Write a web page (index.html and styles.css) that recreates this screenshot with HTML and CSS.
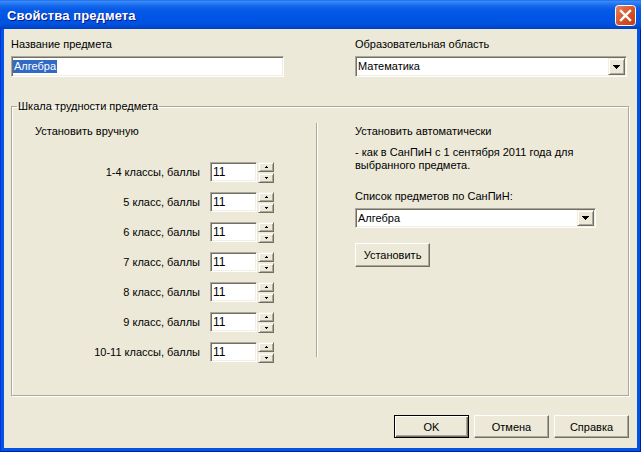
FILE: index.html
```html
<!DOCTYPE html>
<html lang="ru">
<head>
<meta charset="utf-8">
<title>Свойства предмета</title>
<link rel="stylesheet" href="styles.css">
</head>
<body>
<div class="window">
  <div class="titlebar">
    <span class="title">Свойства предмета</span>
    <span class="close" aria-label="Закрыть">
      <svg width="21" height="21" viewBox="0 0 21 21">
        <defs>
          <linearGradient id="cg" x1="0" y1="0" x2="1" y2="1">
            <stop offset="0" stop-color="#E8855F"/>
            <stop offset="0.5" stop-color="#D9542C"/>
            <stop offset="1" stop-color="#C03A12"/>
          </linearGradient>
        </defs>
        <rect x="0.5" y="0.5" width="20" height="20" rx="3" ry="3" fill="url(#cg)" stroke="#FFFFFF"/>
        <path d="M6 6 L15 15 M15 6 L6 15" stroke="#FFFFFF" stroke-width="2.4" stroke-linecap="square"/>
      </svg>
    </span>
  </div>
  <div class="frame">
    <div class="client">
      <div class="top">
        <div class="field">
          <span class="lbl">Название предмета</span>
          <div class="edit"><span class="sel">Алгебра</span></div>
        </div>
        <div class="field">
          <span class="lbl">Образовательная область</span>
          <div class="edit combo">
            <span class="combo-text">Математика</span>
            <span class="raised drop">
              <svg width="7" height="4" viewBox="0 0 7 4" shape-rendering="crispEdges"><rect x="0" y="0" width="7" height="1"/><rect x="1" y="1" width="5" height="1"/><rect x="2" y="2" width="3" height="1"/><rect x="3" y="3" width="1" height="1"/></svg>
            </span>
          </div>
        </div>
      </div>

      <fieldset class="group">
        <legend>Шкала трудности предмета</legend>
        <div class="cols">
          <div class="manual">
            <div class="head">Установить вручную</div>
            <div class="rows">
              <div class="row"><span class="rlbl">1-4 классы, баллы</span><div class="edit num">11</div><div class="spin"><span class="raised sb"><svg width="3" height="2" viewBox="0 0 3 2" shape-rendering="crispEdges"><rect x="1" y="0" width="1" height="1"/><rect x="0" y="1" width="3" height="1"/></svg></span><span class="raised sb"><svg width="3" height="2" viewBox="0 0 3 2" shape-rendering="crispEdges"><rect x="0" y="0" width="3" height="1"/><rect x="1" y="1" width="1" height="1"/></svg></span></div></div>
              <div class="row"><span class="rlbl">5 класс, баллы</span><div class="edit num">11</div><div class="spin"><span class="raised sb"><svg width="3" height="2" viewBox="0 0 3 2" shape-rendering="crispEdges"><rect x="1" y="0" width="1" height="1"/><rect x="0" y="1" width="3" height="1"/></svg></span><span class="raised sb"><svg width="3" height="2" viewBox="0 0 3 2" shape-rendering="crispEdges"><rect x="0" y="0" width="3" height="1"/><rect x="1" y="1" width="1" height="1"/></svg></span></div></div>
              <div class="row"><span class="rlbl">6 класс, баллы</span><div class="edit num">11</div><div class="spin"><span class="raised sb"><svg width="3" height="2" viewBox="0 0 3 2" shape-rendering="crispEdges"><rect x="1" y="0" width="1" height="1"/><rect x="0" y="1" width="3" height="1"/></svg></span><span class="raised sb"><svg width="3" height="2" viewBox="0 0 3 2" shape-rendering="crispEdges"><rect x="0" y="0" width="3" height="1"/><rect x="1" y="1" width="1" height="1"/></svg></span></div></div>
              <div class="row"><span class="rlbl">7 класс, баллы</span><div class="edit num">11</div><div class="spin"><span class="raised sb"><svg width="3" height="2" viewBox="0 0 3 2" shape-rendering="crispEdges"><rect x="1" y="0" width="1" height="1"/><rect x="0" y="1" width="3" height="1"/></svg></span><span class="raised sb"><svg width="3" height="2" viewBox="0 0 3 2" shape-rendering="crispEdges"><rect x="0" y="0" width="3" height="1"/><rect x="1" y="1" width="1" height="1"/></svg></span></div></div>
              <div class="row"><span class="rlbl">8 класс, баллы</span><div class="edit num">11</div><div class="spin"><span class="raised sb"><svg width="3" height="2" viewBox="0 0 3 2" shape-rendering="crispEdges"><rect x="1" y="0" width="1" height="1"/><rect x="0" y="1" width="3" height="1"/></svg></span><span class="raised sb"><svg width="3" height="2" viewBox="0 0 3 2" shape-rendering="crispEdges"><rect x="0" y="0" width="3" height="1"/><rect x="1" y="1" width="1" height="1"/></svg></span></div></div>
              <div class="row"><span class="rlbl">9 класс, баллы</span><div class="edit num">11</div><div class="spin"><span class="raised sb"><svg width="3" height="2" viewBox="0 0 3 2" shape-rendering="crispEdges"><rect x="1" y="0" width="1" height="1"/><rect x="0" y="1" width="3" height="1"/></svg></span><span class="raised sb"><svg width="3" height="2" viewBox="0 0 3 2" shape-rendering="crispEdges"><rect x="0" y="0" width="3" height="1"/><rect x="1" y="1" width="1" height="1"/></svg></span></div></div>
              <div class="row"><span class="rlbl">10-11 классы, баллы</span><div class="edit num">11</div><div class="spin"><span class="raised sb"><svg width="3" height="2" viewBox="0 0 3 2" shape-rendering="crispEdges"><rect x="1" y="0" width="1" height="1"/><rect x="0" y="1" width="3" height="1"/></svg></span><span class="raised sb"><svg width="3" height="2" viewBox="0 0 3 2" shape-rendering="crispEdges"><rect x="0" y="0" width="3" height="1"/><rect x="1" y="1" width="1" height="1"/></svg></span></div></div>
            </div>
          </div>
          <div class="vsep"></div>
          <div class="auto">
            <div class="head">Установить автоматически</div>
            <p class="para">- как в СанПиН с 1 сентября 2011 года для<br>выбранного предмета.</p>
            <span class="lbl list-lbl">Список предметов по СанПиН:</span>
            <div class="edit combo small">
              <span class="combo-text">Алгебра</span>
              <span class="raised drop">
                <svg width="7" height="4" viewBox="0 0 7 4" shape-rendering="crispEdges"><rect x="0" y="0" width="7" height="1"/><rect x="1" y="1" width="5" height="1"/><rect x="2" y="2" width="3" height="1"/><rect x="3" y="3" width="1" height="1"/></svg>
              </span>
            </div>
            <span class="btn set">Установить</span>
          </div>
        </div>
      </fieldset>

      <div class="buttons">
        <span class="btn default">OK</span>
        <span class="btn">Отмена</span>
        <span class="btn">Справка</span>
      </div>
    </div>
  </div>
</div>
</body>
</html>
```

FILE: styles.css
```css
html, body {
  margin: 0;
  padding: 0;
}

body {
  width: 641px;
  height: 452px;
  overflow: hidden;
  background: #0054E3;
  font-family: "Liberation Sans", Arial, sans-serif;
  font-size: 11px;
  color: #000;
}

.window {
  width: 641px;
  height: 452px;
  display: flex;
  flex-direction: column;
}

.titlebar {
  height: 29px;
  flex: none;
  box-sizing: border-box;
  padding: 2px 5px 0 7px;
  display: flex;
  align-items: center;
  justify-content: space-between;
  background: linear-gradient(to bottom,
    #0A5EEA 0px, #3D8DF7 1px, #2B7DF3 3px, #1368EC 6px,
    #0759E6 10px, #0055E5 17px, #0053E1 23px, #004BD6 26px, #003FBE 29px);
}

.title {
  color: #fff;
  font-weight: bold;
  font-size: 13px;
  line-height: 16px;
  text-shadow: 1px 1px 0 #0A1883;
  letter-spacing: 0.1px;
}

.close {
  display: block;
  width: 21px;
  height: 21px;
}

.close svg {
  display: block;
}

.frame {
  flex: 1;
  display: flex;
  padding: 0 4px 4px 4px;
  background: #0055E5;
  box-shadow: inset 1px 0 0 #0831D9, inset -1px 0 0 #001EA0, inset 0 -1px 0 #001EA0;
}

.client {
  flex: 1;
  background: #ECE9D8;
  padding: 9px 8px 0 7px;
  display: flex;
  flex-direction: column;
}

/* top row */
.top {
  display: grid;
  grid-template-columns: 273px 272px;
  column-gap: 71px;
}

.field {
  display: flex;
  flex-direction: column;
}

.lbl {
  display: block;
  line-height: 13px;
  height: 13px;
  margin-bottom: 5px;
  white-space: nowrap;
}

/* sunken edit frame */
.edit {
  box-sizing: border-box;
  height: 21px;
  background: #fff;
  border: 1px solid;
  border-color: #ACA899 #FFFFFF #FFFFFF #ACA899;
  box-shadow: inset 1px 1px 0 #716F64, inset -1px -1px 0 #F1EFE2;
  padding: 1px 1px 1px 1px;
  display: flex;
  align-items: center;
  white-space: nowrap;
}

.sel {
  background: #316AC5;
  color: #fff;
  line-height: 13px;
  padding: 0 1px;
}

.combo {
  padding: 1px 1px 1px 1px;
}

.combo-text {
  flex: 1;
  padding-left: 1px;
  line-height: 13px;
}

.raised {
  box-sizing: border-box;
  background: #ECE9D8;
  border: 1px solid;
  border-color: #F1EFE2 #716F64 #716F64 #F1EFE2;
  box-shadow: inset 1px 1px 0 #fff, inset -1px -1px 0 #ACA899;
  display: flex;
  align-items: center;
  justify-content: center;
}

.drop {
  width: 17px;
  height: 17px;
  flex: none;
}

.drop svg, .sb svg {
  display: block;
  fill: #000;
}

/* group box */
.group {
  margin: 23px 0 0 0;
  padding: 10px 0 33px 0;
  min-width: 0;
  border: 1px solid #ACA899;
  box-shadow: inset 1px 1px 0 #fff, 1px 1px 0 #fff;
}

.group legend {
  padding: 0 1px;
  margin-left: 5px;
  line-height: 13px;
}

.cols {
  display: flex;
  align-items: flex-start;
}

.manual {
  width: 304px;
  flex: none;
}

.head {
  padding-top: 2px;
  line-height: 13px;
  height: 13px;
  white-space: nowrap;
}

.manual .head {
  padding-left: 23px;
}

.rows {
  margin-top: 24px;
  display: flex;
  flex-direction: column;
  gap: 10px;
}

.row {
  height: 20px;
  display: flex;
  align-items: center;
  justify-content: flex-end;
  padding-right: 42px;
}

.rlbl {
  margin-right: 10px;
  white-space: nowrap;
}

.num {
  width: 47px;
  height: 20px;
  padding-left: 2px;
  font-size: 12px;
}

.spin {
  width: 16px;
  height: 21px;
  margin-left: 1px;
  display: flex;
  flex-direction: column;
  justify-content: space-between;
}

.sb {
  height: 10px;
}

.vsep {
  width: 1px;
  height: 234px;
  flex: none;
  background: #ACA899;
  border-right: 1px solid #fff;
}

.auto {
  flex: 1;
  padding-left: 37px;
  display: flex;
  flex-direction: column;
  align-items: flex-start;
}

.para {
  margin: 8px 0 0 0;
  line-height: 13px;
  white-space: nowrap;
}

.list-lbl {
  margin-top: 18px;
}

.small {
  width: 241px;
  height: 20px;
}

.small .drop {
  height: 16px;
}

/* buttons */
.btn {
  box-sizing: border-box;
  width: 75px;
  height: 23px;
  background: #ECE9D8;
  border: 1px solid;
  border-color: #FFFFFF #716F64 #716F64 #FFFFFF;
  box-shadow: inset -1px -1px 0 #ACA899;
  display: flex;
  align-items: center;
  justify-content: center;
  white-space: nowrap;
}

.btn.default {
  border-color: #000;
  box-shadow: inset 1px 1px 0 #fff, inset -1px -1px 0 #716F64, inset -2px -2px 0 #ACA899;
}

.set {
  margin-top: 15px;
  height: 24px;
}

.buttons {
  margin-top: 19px;
  display: flex;
  justify-content: flex-end;
  gap: 5px;
}
```
